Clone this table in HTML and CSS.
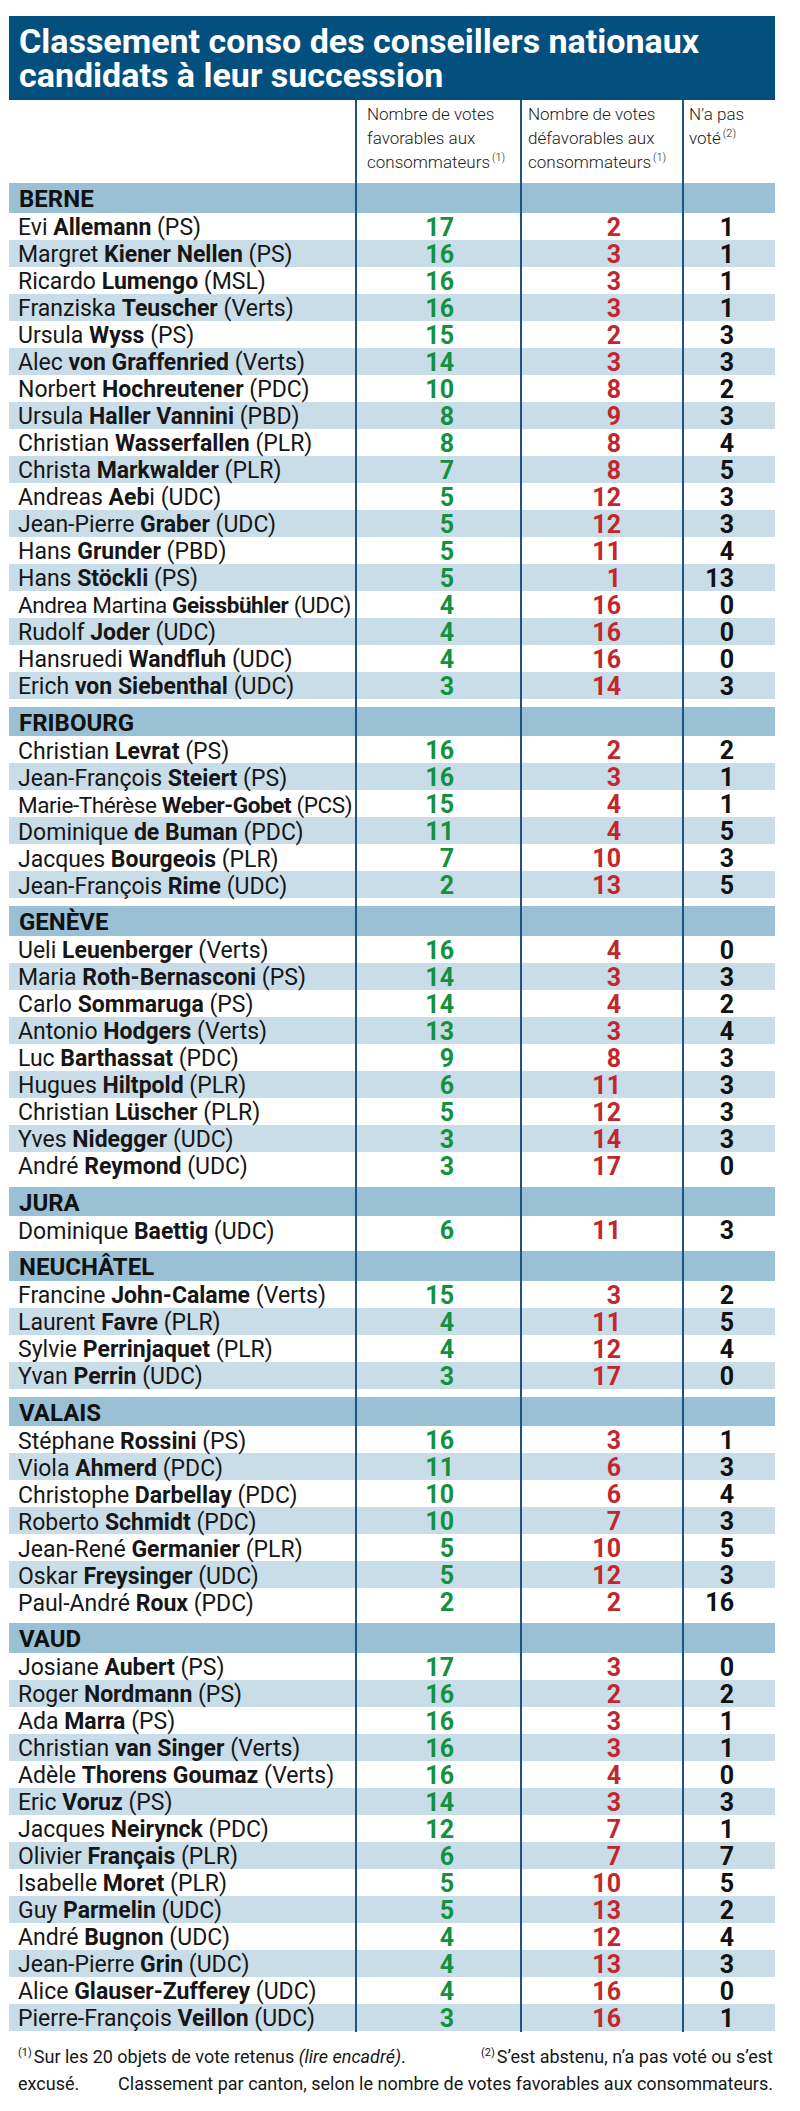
FILE: index.html
```html
<!DOCTYPE html>
<html lang="fr">
<head>
<meta charset="utf-8">
<title>Classement conso des conseillers nationaux</title>
<link rel="stylesheet" href="styles.css">
</head>
<body>
<div class="chart">
  <h1 class="title"><span class="tline">Classement conso des conseillers nationaux</span><span class="tline">candidats à leur succession</span></h1>

  <div class="row head">
    <div></div>
    <div class="h h1">Nombre de votes<br>favorables aux<br>consommateurs<span class="sup">(1)</span></div>
    <div class="h h2">Nombre de votes<br>défavorables aux<br>consommateurs<span class="sup">(1)</span></div>
    <div class="h h3">N’a pas<br>voté<span class="sup">(2)</span></div>
  </div>

  <div class="row sec"><div class="canton">BERNE</div><div></div><div></div><div></div></div>
  <div class="row"><div class="n">Evi <b>Allemann</b> (PS)</div><div class="g">17</div><div class="r">2</div><div class="k">1</div></div>
  <div class="row alt"><div class="n">Margret <b>Kiener Nellen</b> (PS)</div><div class="g">16</div><div class="r">3</div><div class="k">1</div></div>
  <div class="row"><div class="n">Ricardo <b>Lumengo</b> (MSL)</div><div class="g">16</div><div class="r">3</div><div class="k">1</div></div>
  <div class="row alt"><div class="n">Franziska <b>Teuscher</b> (Verts)</div><div class="g">16</div><div class="r">3</div><div class="k">1</div></div>
  <div class="row"><div class="n">Ursula <b>Wyss</b> (PS)</div><div class="g">15</div><div class="r">2</div><div class="k">3</div></div>
  <div class="row alt"><div class="n">Alec <b>von Graffenried</b> (Verts)</div><div class="g">14</div><div class="r">3</div><div class="k">3</div></div>
  <div class="row"><div class="n">Norbert <b>Hochreutener</b> (PDC)</div><div class="g">10</div><div class="r">8</div><div class="k">2</div></div>
  <div class="row alt"><div class="n">Ursula <b>Haller Vannini</b> (PBD)</div><div class="g">8</div><div class="r">9</div><div class="k">3</div></div>
  <div class="row"><div class="n">Christian <b>Wasserfallen</b> (PLR)</div><div class="g">8</div><div class="r">8</div><div class="k">4</div></div>
  <div class="row alt"><div class="n">Christa <b>Markwalder</b> (PLR)</div><div class="g">7</div><div class="r">8</div><div class="k">5</div></div>
  <div class="row"><div class="n">Andreas <b>Aeb</b>i (UDC)</div><div class="g">5</div><div class="r">12</div><div class="k">3</div></div>
  <div class="row alt"><div class="n">Jean-Pierre <b>Graber</b> (UDC)</div><div class="g">5</div><div class="r">12</div><div class="k">3</div></div>
  <div class="row"><div class="n">Hans <b>Grunder</b> (PBD)</div><div class="g">5</div><div class="r">11</div><div class="k">4</div></div>
  <div class="row alt"><div class="n">Hans <b>Stöckli</b> (PS)</div><div class="g">5</div><div class="r">1</div><div class="k">13</div></div>
  <div class="row"><div class="n tight">Andrea Martina <b>Geissbühler</b> (UDC)</div><div class="g">4</div><div class="r">16</div><div class="k">0</div></div>
  <div class="row alt"><div class="n">Rudolf <b>Joder</b> (UDC)</div><div class="g">4</div><div class="r">16</div><div class="k">0</div></div>
  <div class="row"><div class="n">Hansruedi <b>Wandfluh</b> (UDC)</div><div class="g">4</div><div class="r">16</div><div class="k">0</div></div>
  <div class="row alt"><div class="n">Erich <b>von Siebenthal</b> (UDC)</div><div class="g">3</div><div class="r">14</div><div class="k">3</div></div>
  <div class="row gap"><div></div><div></div><div></div><div></div></div>

  <div class="row sec"><div class="canton">FRIBOURG</div><div></div><div></div><div></div></div>
  <div class="row"><div class="n">Christian <b>Levrat</b> (PS)</div><div class="g">16</div><div class="r">2</div><div class="k">2</div></div>
  <div class="row alt"><div class="n">Jean-François <b>Steiert</b> (PS)</div><div class="g">16</div><div class="r">3</div><div class="k">1</div></div>
  <div class="row"><div class="n tight">Marie-Thérèse <b>Weber-Gobet</b> (PCS)</div><div class="g">15</div><div class="r">4</div><div class="k">1</div></div>
  <div class="row alt"><div class="n">Dominique <b>de Buman</b> (PDC)</div><div class="g">11</div><div class="r">4</div><div class="k">5</div></div>
  <div class="row"><div class="n">Jacques <b>Bourgeois</b> (PLR)</div><div class="g">7</div><div class="r">10</div><div class="k">3</div></div>
  <div class="row alt"><div class="n">Jean-François <b>Rime</b> (UDC)</div><div class="g">2</div><div class="r">13</div><div class="k">5</div></div>
  <div class="row gap"><div></div><div></div><div></div><div></div></div>

  <div class="row sec"><div class="canton">GENÈVE</div><div></div><div></div><div></div></div>
  <div class="row"><div class="n">Ueli <b>Leuenberger</b> (Verts)</div><div class="g">16</div><div class="r">4</div><div class="k">0</div></div>
  <div class="row alt"><div class="n">Maria <b>Roth-Bernasconi</b> (PS)</div><div class="g">14</div><div class="r">3</div><div class="k">3</div></div>
  <div class="row"><div class="n">Carlo <b>Sommaruga</b> (PS)</div><div class="g">14</div><div class="r">4</div><div class="k">2</div></div>
  <div class="row alt"><div class="n">Antonio <b>Hodgers</b> (Verts)</div><div class="g">13</div><div class="r">3</div><div class="k">4</div></div>
  <div class="row"><div class="n">Luc <b>Barthassat</b> (PDC)</div><div class="g">9</div><div class="r">8</div><div class="k">3</div></div>
  <div class="row alt"><div class="n">Hugues <b>Hiltpold</b> (PLR)</div><div class="g">6</div><div class="r">11</div><div class="k">3</div></div>
  <div class="row"><div class="n">Christian <b>Lüscher</b> (PLR)</div><div class="g">5</div><div class="r">12</div><div class="k">3</div></div>
  <div class="row alt"><div class="n">Yves <b>Nidegger</b> (UDC)</div><div class="g">3</div><div class="r">14</div><div class="k">3</div></div>
  <div class="row"><div class="n">André <b>Reymond</b> (UDC)</div><div class="g">3</div><div class="r">17</div><div class="k">0</div></div>
  <div class="row gap"><div></div><div></div><div></div><div></div></div>

  <div class="row sec"><div class="canton">JURA</div><div></div><div></div><div></div></div>
  <div class="row"><div class="n">Dominique <b>Baettig</b> (UDC)</div><div class="g">6</div><div class="r">11</div><div class="k">3</div></div>
  <div class="row gap"><div></div><div></div><div></div><div></div></div>

  <div class="row sec"><div class="canton">NEUCHÂTEL</div><div></div><div></div><div></div></div>
  <div class="row"><div class="n">Francine <b>John-Calame</b> (Verts)</div><div class="g">15</div><div class="r">3</div><div class="k">2</div></div>
  <div class="row alt"><div class="n">Laurent <b>Favre</b> (PLR)</div><div class="g">4</div><div class="r">11</div><div class="k">5</div></div>
  <div class="row"><div class="n">Sylvie <b>Perrinjaquet</b> (PLR)</div><div class="g">4</div><div class="r">12</div><div class="k">4</div></div>
  <div class="row alt"><div class="n">Yvan <b>Perrin</b> (UDC)</div><div class="g">3</div><div class="r">17</div><div class="k">0</div></div>
  <div class="row gap"><div></div><div></div><div></div><div></div></div>

  <div class="row sec"><div class="canton">VALAIS</div><div></div><div></div><div></div></div>
  <div class="row"><div class="n">Stéphane <b>Rossini</b> (PS)</div><div class="g">16</div><div class="r">3</div><div class="k">1</div></div>
  <div class="row alt"><div class="n">Viola <b>Ahmerd</b> (PDC)</div><div class="g">11</div><div class="r">6</div><div class="k">3</div></div>
  <div class="row"><div class="n">Christophe <b>Darbellay</b> (PDC)</div><div class="g">10</div><div class="r">6</div><div class="k">4</div></div>
  <div class="row alt"><div class="n">Roberto <b>Schmidt</b> (PDC)</div><div class="g">10</div><div class="r">7</div><div class="k">3</div></div>
  <div class="row"><div class="n">Jean-René <b>Germanier</b> (PLR)</div><div class="g">5</div><div class="r">10</div><div class="k">5</div></div>
  <div class="row alt"><div class="n">Oskar <b>Freysinger</b> (UDC)</div><div class="g">5</div><div class="r">12</div><div class="k">3</div></div>
  <div class="row"><div class="n">Paul-André <b>Roux</b> (PDC)</div><div class="g">2</div><div class="r">2</div><div class="k">16</div></div>
  <div class="row gap"><div></div><div></div><div></div><div></div></div>

  <div class="row sec"><div class="canton">VAUD</div><div></div><div></div><div></div></div>
  <div class="row"><div class="n">Josiane <b>Aubert</b> (PS)</div><div class="g">17</div><div class="r">3</div><div class="k">0</div></div>
  <div class="row alt"><div class="n">Roger <b>Nordmann</b> (PS)</div><div class="g">16</div><div class="r">2</div><div class="k">2</div></div>
  <div class="row"><div class="n">Ada <b>Marra</b> (PS)</div><div class="g">16</div><div class="r">3</div><div class="k">1</div></div>
  <div class="row alt"><div class="n">Christian <b>van Singer</b> (Verts)</div><div class="g">16</div><div class="r">3</div><div class="k">1</div></div>
  <div class="row"><div class="n">Adèle <b>Thorens Goumaz</b> (Verts)</div><div class="g">16</div><div class="r">4</div><div class="k">0</div></div>
  <div class="row alt"><div class="n">Eric <b>Voruz</b> (PS)</div><div class="g">14</div><div class="r">3</div><div class="k">3</div></div>
  <div class="row"><div class="n">Jacques <b>Neirynck</b> (PDC)</div><div class="g">12</div><div class="r">7</div><div class="k">1</div></div>
  <div class="row alt"><div class="n">Olivier <b>Français</b> (PLR)</div><div class="g">6</div><div class="r">7</div><div class="k">7</div></div>
  <div class="row"><div class="n">Isabelle <b>Moret</b> (PLR)</div><div class="g">5</div><div class="r">10</div><div class="k">5</div></div>
  <div class="row alt"><div class="n">Guy <b>Parmelin</b> (UDC)</div><div class="g">5</div><div class="r">13</div><div class="k">2</div></div>
  <div class="row"><div class="n">André <b>Bugnon</b> (UDC)</div><div class="g">4</div><div class="r">12</div><div class="k">4</div></div>
  <div class="row alt"><div class="n">Jean-Pierre <b>Grin</b> (UDC)</div><div class="g">4</div><div class="r">13</div><div class="k">3</div></div>
  <div class="row"><div class="n">Alice <b>Glauser-Zufferey</b> (UDC)</div><div class="g">4</div><div class="r">16</div><div class="k">0</div></div>
  <div class="row alt"><div class="n">Pierre-François <b>Veillon</b> (UDC)</div><div class="g">3</div><div class="r">16</div><div class="k">1</div></div>

  <div class="notes">
    <p class="line"><span><span class="fsup">(1)</span>Sur les 20 objets de vote retenus <i>(lire encadré)</i>.</span><span><span class="fsup">(2)</span>S’est abstenu, n’a pas voté ou s’est</span></p>
    <p class="line"><span>excusé.</span><span>Classement par canton, selon le nombre de votes favorables aux consommateurs.</span></p>
  </div>
</div>
</body>
</html>
```

FILE: styles.css
```css
* {
  box-sizing: border-box;
}

body {
  margin: 0;
  background: #ffffff;
  font-family: Roboto, "Liberation Sans", Arial, sans-serif;
  color: #161616;
}

.chart {
  width: 766px;
  margin: 16px 0 0 9px;
}

.title {
  margin: 0;
  height: 84px;
  padding: 8px 10px;
  background: #034f7d;
  color: #ffffff;
  font-size: 34px;
  line-height: 34px;
  font-weight: 700;
}

.tline {
  display: block;
  height: 34px;
}

.row {
  display: grid;
  grid-template-columns: 346px 165px 162px 93px;
  height: 27px;
}

.row > div + div {
  border-left: 2px solid #1f5482;
}

.head {
  height: 83px;
}

.h {
  font-size: 17px;
  line-height: 24px;
  font-weight: 300;
  color: #1a1a1a;
  padding-top: 2px;
  white-space: nowrap;
}

.h1 {
  padding-left: 10px;
}

.h2 {
  padding-left: 6px;
}

.h3 {
  padding-left: 5px;
}

.sup {
  font-size: 11px;
  vertical-align: 7px;
  margin-left: 2px;
  line-height: 0;
}

.sec {
  height: 29.5px;
  background: #9ac0d6;
}

.canton {
  font-size: 24px;
  font-weight: 700;
  line-height: 29.5px;
  padding: 2px 0 0 10px;
  color: #111111;
}

.alt {
  background: #c9dde9;
}

.gap {
  height: 8px;
}

.n {
  font-size: 23px;
  line-height: 27px;
  padding: 1.5px 0 0 9px;
  white-space: nowrap;
  color: #161616;
}

.n.tight {
  font-size: 22.5px;
  letter-spacing: -0.4px;
}

.n b {
  font-weight: 700;
}

.g,
.r,
.k {
  font-size: 25px;
  line-height: 27px;
  font-weight: 700;
  text-align: right;
  padding-top: 1px;
}

.g {
  color: #13913f;
  padding-right: 66px;
}

.r {
  color: #c1272d;
  padding-right: 61px;
}

.k {
  color: #111111;
  padding-right: 41px;
}

.notes {
  padding: 12px 2px 0 9px;
  font-size: 18px;
  line-height: 27px;
  color: #161616;
}

.line {
  margin: 0;
  display: flex;
  justify-content: space-between;
  white-space: nowrap;
}

.fsup {
  font-size: 11px;
  vertical-align: 7px;
  line-height: 0;
  margin-right: 2px;
}
```
